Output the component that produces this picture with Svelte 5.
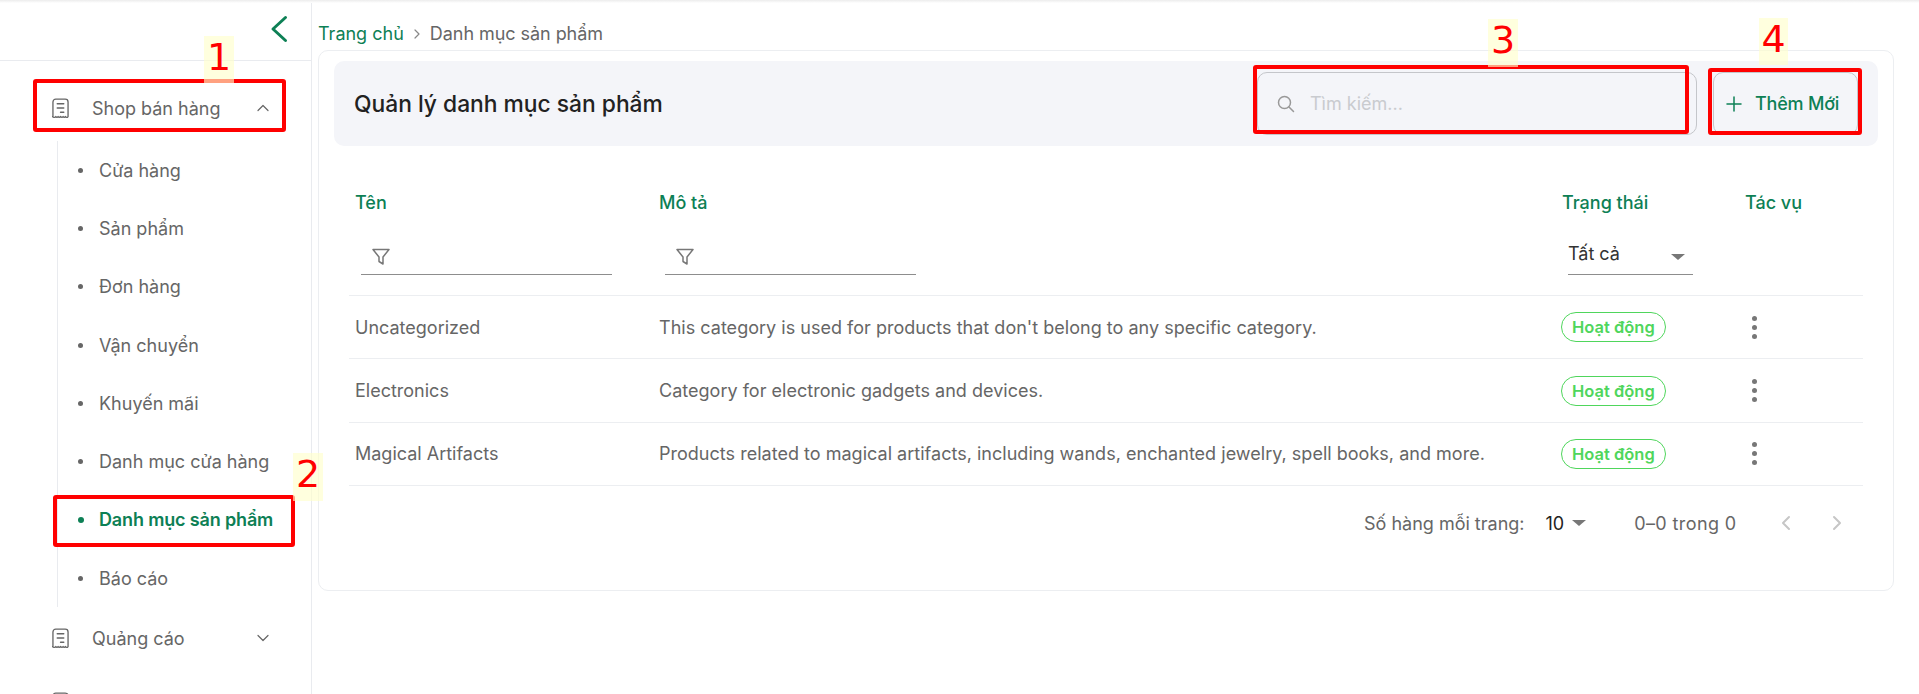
<script>
  const subs = ['Cửa hàng', 'Sản phẩm', 'Đơn hàng', 'Vận chuyển', 'Khuyến mãi', 'Danh mục cửa hàng', 'Danh mục sản phẩm', 'Báo cáo'];
  const rows = [
    { name: 'Uncategorized', desc: "This category is used for products that don't belong to any specific category." },
    { name: 'Electronics', desc: 'Category for electronic gadgets and devices.' },
    { name: 'Magical Artifacts', desc: 'Products related to magical artifacts, including wands, enchanted jewelry, spell books, and more.' }
  ];
  const marks = [
    { n: 1, box: 'left:33px;top:79px;width:253px;height:53px', tag: 'left:204px;top:36px;width:30px;height:47px' },
    { n: 2, box: 'left:53px;top:495px;width:242px;height:52px', tag: 'left:293px;top:453px;width:30px;height:48px' },
    { n: 3, box: 'left:1253px;top:65px;width:436px;height:69px', tag: 'left:1488px;top:19px;width:30px;height:48px' },
    { n: 4, box: 'left:1708px;top:68px;width:154px;height:67px', tag: 'left:1759px;top:18px;width:29px;height:47px' }
  ];
</script>

{#snippet receipt()}
  <svg class="receipt" viewBox="0 0 18 22" fill="none" stroke="currentColor" stroke-width="1.400" stroke-linecap="round" stroke-linejoin="round">
    <path d="M1 19.500V4a3 3 0 0 1 3-3h10a3 3 0 0 1 3 3v15.500c-1 1.500-2 1-2.700 0-.7 1-1.800 1-2.500 0-.7 1-1.800 1-2.800 0-.7 1-1.800 1-2.500 0-.7 1-1.800 1-2.500 0-.7 1-2.500 1.500-3.500 0z"/>
    <path d="M5.500 6h7M5.500 10.500h7M9 15h3.500"/>
  </svg>
{/snippet}

{#snippet funnel()}
  <svg class="funnel" viewBox="0 0 18 18" fill="none" stroke="currentColor" stroke-width="1.500" stroke-linejoin="round">
    <path d="M1 1.500h16l-6 7.500v7l-4-2.500V9z"/>
  </svg>
{/snippet}

<div class="topshade"></div>
<div class="page">
  <aside class="sidebar">
    <div class="side-head">
      <svg class="collapse" viewBox="0 0 18 28" fill="none" stroke="currentColor" stroke-width="3" stroke-linecap="round" stroke-linejoin="round">
        <path d="M15.500 2.500 3 14l12.500 11.500"/>
      </svg>
    </div>
    <nav class="menu">
      <div class="menu-item">
        {@render receipt()}
        <span class="menu-label">Shop bán hàng</span>
        <svg class="caret" viewBox="0 0 12 8" fill="none" stroke="currentColor" stroke-width="1.200" stroke-linecap="round" stroke-linejoin="round"><path d="M1 6.500 6 1.500l5 5"/></svg>
      </div>
      <ul class="submenu">
        {#each subs as s}
          <li class:active={s === 'Danh mục sản phẩm'}><i></i>{s}</li>
        {/each}
      </ul>
      <div class="menu-item">
        {@render receipt()}
        <span class="menu-label">Quảng cáo</span>
        <svg class="caret" viewBox="0 0 12 8" fill="none" stroke="currentColor" stroke-width="1.200" stroke-linecap="round" stroke-linejoin="round"><path d="M1 1.500 6 6.500l5-5"/></svg>
      </div>
      <div class="menu-item next">
        {@render receipt()}
      </div>
    </nav>
  </aside>

  <main class="main">
    <div class="crumbs">
      <span class="home">Trang chủ</span>
      <svg class="sep" viewBox="0 0 8 12" fill="none" stroke="currentColor" stroke-width="1.200" stroke-linecap="round" stroke-linejoin="round"><path d="M2 2l4 4-4 4"/></svg>
      <span class="here">Danh mục sản phẩm</span>
    </div>
    <section class="card">
      <header class="bar">
        <h1>Quản lý danh mục sản phẩm</h1>
        <div class="search">
          <svg viewBox="0 0 18 18" fill="none" stroke="currentColor" stroke-width="1.500" stroke-linecap="round"><circle cx="7.500" cy="7.500" r="6"/><path d="m12 12 4.500 4.500"/></svg>
          <span>Tìm kiếm...</span>
        </div>
        <button class="add">
          <svg viewBox="0 0 16 16" fill="none" stroke="currentColor" stroke-width="1.500" stroke-linecap="round"><path d="M8 1v14M1 8h14"/></svg>
          Thêm Mới
        </button>
      </header>

      <div class="table">
        <div class="thead">
          <div class="th">Tên</div>
          <div class="th">Mô tả</div>
          <div class="th">Trạng thái</div>
          <div class="th">Tác vụ</div>
          <div class="filter">{@render funnel()}</div>
          <div class="filter">{@render funnel()}</div>
          <div class="filter select"><span>Tất cả</span><b class="tri"></b></div>
          <div></div>
        </div>
        {#each rows as r}
          <div class="tr">
            <div>{r.name}</div>
            <div class="desc">{r.desc}</div>
            <div><span class="badge">Hoạt động</span></div>
            <div class="dots"><i></i><i></i><i></i></div>
          </div>
        {/each}
      </div>

      <footer class="pager">
        <span>Số hàng mỗi trang:</span>
        <span class="size">10<b class="tri"></b></span>
        <span class="count">0–0 trong 0</span>
        <svg class="arrow first" viewBox="0 0 12 18" fill="none" stroke="currentColor" stroke-width="2" stroke-linecap="round" stroke-linejoin="round"><path d="M9 3 3 9l6 6"/></svg>
        <svg class="arrow" viewBox="0 0 12 18" fill="none" stroke="currentColor" stroke-width="2" stroke-linecap="round" stroke-linejoin="round"><path d="m3 3 6 6-6 6"/></svg>
      </footer>
    </section>
  </main>
</div>

{#each marks as m}
  <div class="mark-box" style={m.box}></div>
  <div class="mark-tag" style={m.tag}>{m.n}</div>
{/each}

<style>
  :global(body) {
    margin: 0;
    background: #fff;
    overflow: hidden;
  }
  .topshade {
    position: absolute;
    left: 0;
    right: 0;
    top: 0;
    height: 3px;
    background: linear-gradient(#ececec, #fff);
  }
  .page {
    display: flex;
    width: 1919px;
    height: 694px;
    overflow: hidden;
    font-family: Inter, "Noto Sans", sans-serif;
    font-size: 18px;
    color: #666;
  }
  .sidebar {
    width: 311px;
    flex: none;
    border-right: 1px solid #e9ebef;
  }
  .side-head {
    height: 61px;
    border-bottom: 1px solid #e9ebef;
    display: flex;
    justify-content: flex-end;
    align-items: center;
    padding-right: 23px;
    box-sizing: border-box;
  }
  .collapse {
    width: 18px;
    height: 28px;
    color: #0d8055;
    margin-bottom: 2px;
  }
  .menu {
    padding: 20px 42px 0 52px;
    display: flex;
    flex-direction: column;
  }
  .menu-item {
    height: 54px;
    display: flex;
    align-items: center;
    flex: none;
  }
  .menu-item.next {
    margin-top: 10px;
  }
  .receipt {
    width: 17px;
    height: 21px;
    flex: none;
  }
  .menu-label {
    margin-left: 23px;
    flex: 1;
  }
  .caret {
    width: 12px;
    height: 8px;
  }
  .submenu {
    list-style: none;
    margin: 6px 0 4px 5px;
    padding: 0;
    border-left: 1px solid #e9ebef;
  }
  .submenu li {
    height: 58.300px;
    display: flex;
    align-items: center;
    padding-left: 20px;
    white-space: nowrap;
  }
  .submenu i {
    flex: none;
    width: 5px;
    height: 5px;
    border-radius: 50%;
    background: #666;
    margin-right: 16px;
  }
  .submenu li.active {
    color: #0d8055;
    font-weight: 600;
    letter-spacing: -0.15px;
  }
  .submenu li.active i {
    background: #0d8055;
    width: 6px;
    height: 6px;
    margin-right: 15px;
  }
  .main {
    flex: 1;
    padding: 0 25px 0 6px;
    min-width: 0;
  }
  .crumbs {
    height: 50px;
    box-sizing: border-box;
    padding-top: 17px;
    display: flex;
    align-items: center;
    gap: 9px;
  }
  .home {
    color: #0d8055;
  }
  .here {
    letter-spacing: -0.05px;
  }
  .sep {
    width: 8px;
    height: 12px;
    color: #888;
  }
  .card {
    height: 541px;
    box-sizing: border-box;
    border: 1px solid #eceef1;
    border-radius: 10px;
    padding: 10px 15px;
  }
  .bar {
    height: 85px;
    background: #f4f5f9;
    border-radius: 10px;
    display: flex;
    align-items: center;
    padding: 0 20px;
  }
  h1 {
    margin: 0;
    flex: 1;
    font-size: 22.800px;
    font-weight: 500;
    color: #222;
  }
  .search {
    width: 440px;
    height: 63px;
    box-sizing: border-box;
    border: 1px solid #c4c6ca;
    border-radius: 10px;
    display: flex;
    align-items: center;
    padding-left: 19px;
    gap: 15px;
    color: #c9cbcf;
  }
  .search svg {
    width: 18px;
    height: 18px;
    color: #999;
  }
  .add {
    margin-left: 16px;
    width: 145px;
    height: 63px;
    box-sizing: border-box;
    border: 1px solid #c4c6ca;
    border-radius: 10px;
    background: transparent;
    color: #0d8055;
    font: inherit;
    font-weight: 500;
    letter-spacing: -0.2px;
    display: flex;
    align-items: center;
    padding: 0 0 0 12px;
    gap: 13px;
    white-space: nowrap;
  }
  .add svg {
    width: 16px;
    height: 16px;
    flex: none;
  }
  .table {
    margin-left: 15px;
    width: 1514px;
  }
  .thead,
  .tr {
    display: grid;
    grid-template-columns: 304px 903px 183px 1fr;
    padding-left: 6px;
  }
  .thead {
    height: 150px;
    box-sizing: border-box;
    padding-top: 40px;
    grid-template-rows: 32px 57px;
    color: #0d8055;
    font-weight: 500;
    border-bottom: 1px solid #eceef1;
  }
  .th {
    align-self: center;
  }
  .filter {
    margin: 0 0 0 6px;
    width: 251px;
    height: 36px;
    align-self: end;
    border-bottom: 1px solid #8d8d8d;
    display: flex;
    align-items: center;
    color: #777;
    padding-left: 11px;
    box-sizing: border-box;
  }
  .funnel {
    width: 18px;
    height: 18px;
  }
  .select {
    width: 125px;
    padding: 0;
    color: #333;
    font-weight: 400;
    justify-content: space-between;
    padding-right: 8px;
  }
  .select span {
    margin-bottom: 6px;
  }
  .tri {
    width: 0;
    height: 0;
    border-left: 7px solid transparent;
    border-right: 7px solid transparent;
    border-top: 6px solid #777;
  }
  .tr {
    height: 63.400px;
    align-items: center;
    box-sizing: border-box;
    border-bottom: 1px solid #eceef1;
    white-space: nowrap;
  }
  .desc {
    letter-spacing: 0.02px;
  }
  .badge {
    display: inline-flex;
    align-items: center;
    height: 30px;
    box-sizing: border-box;
    padding: 0 10px;
    border: 1.500px solid #4fd65c;
    border-radius: 15px;
    color: #4fd65c;
    font-size: 16.500px;
    font-weight: 600;
    margin-left: -1px;
  }
  .dots {
    display: flex;
    flex-direction: column;
    gap: 4px;
    margin-left: 7px;
  }
  .dots i {
    width: 5px;
    height: 5px;
    border-radius: 50%;
    background: #777;
  }
  .pager {
    display: flex;
    align-items: center;
    margin-top: 19px;
    padding-left: 1030px;
    height: 36px;
  }
  .size {
    margin-left: 21px;
    color: #222;
    display: flex;
    align-items: center;
    gap: 8px;
  }
  .count {
    margin-left: 48px;
    letter-spacing: 0.4px;
  }
  .arrow {
    width: 12px;
    height: 18px;
    color: #c6c6c6;
    margin-left: 39px;
  }
  .arrow.first {
    margin-left: 43px;
  }
  .mark-box {
    position: absolute;
    box-sizing: border-box;
    border: 4px solid #ff0000;
    border-radius: 3px;
  }
  .mark-tag {
    position: absolute;
    background: rgba(255, 255, 203, 0.63);
    color: #ff0000;
    font-family: "DejaVu Sans", sans-serif;
    font-size: 38px;
    line-height: 43px;
    text-align: center;
  }
</style>
